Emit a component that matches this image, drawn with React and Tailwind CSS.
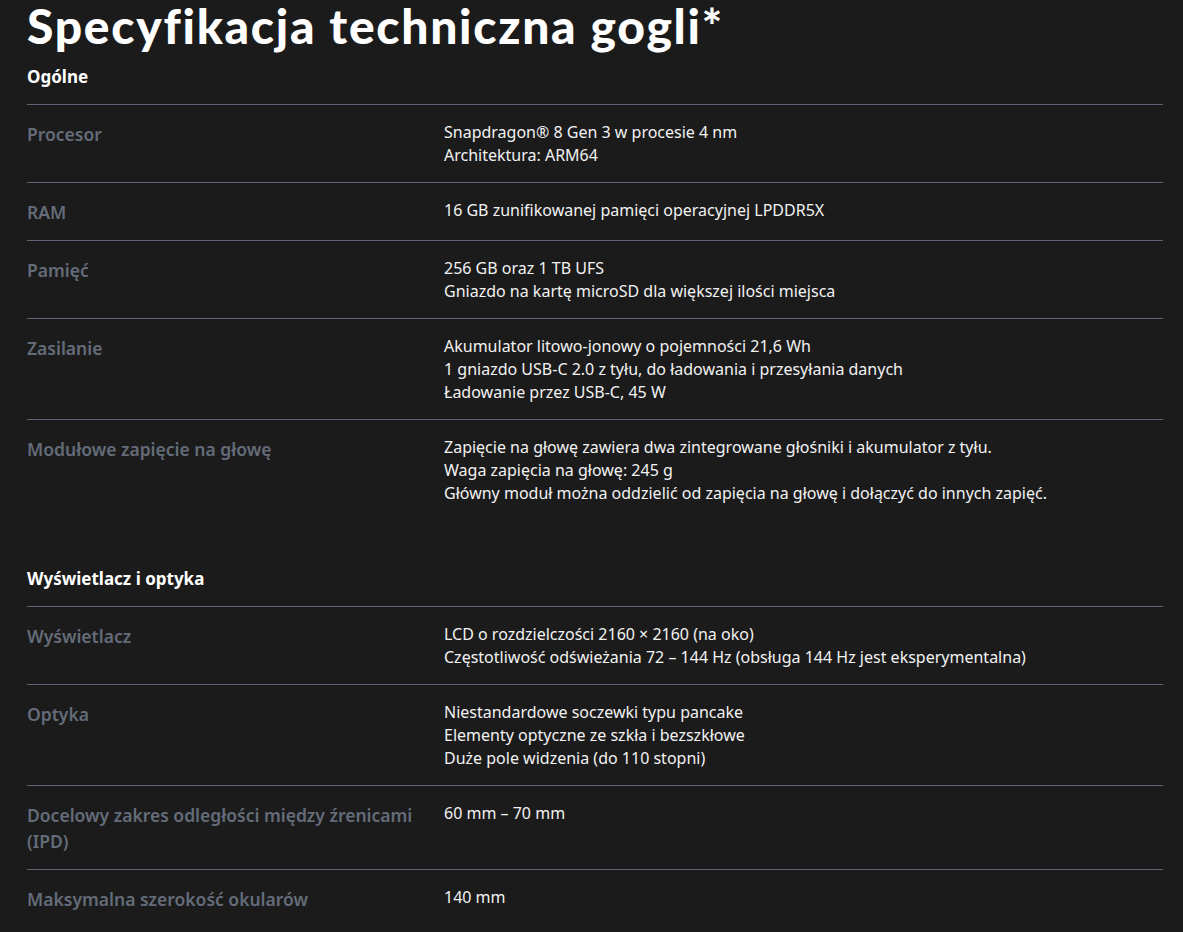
import React from "react";

const GROUPS = [
  {
    title: "Ogólne",
    rows: [
      { label: "Procesor", value: ["Snapdragon® 8 Gen 3 w procesie 4 nm", "Architektura: ARM64"] },
      { label: "RAM", value: ["16 GB zunifikowanej pamięci operacyjnej LPDDR5X"] },
      { label: "Pamięć", value: ["256 GB oraz 1 TB UFS", "Gniazdo na kartę microSD dla większej ilości miejsca"] },
      {
        label: "Zasilanie",
        value: [
          "Akumulator litowo-jonowy o pojemności 21,6 Wh",
          "1 gniazdo USB-C 2.0 z tyłu, do ładowania i przesyłania danych",
          "Ładowanie przez USB-C, 45 W",
        ],
      },
      {
        label: "Modułowe zapięcie na głowę",
        value: [
          "Zapięcie na głowę zawiera dwa zintegrowane głośniki i akumulator z tyłu.",
          "Waga zapięcia na głowę: 245 g",
          "Główny moduł można oddzielić od zapięcia na głowę i dołączyć do innych zapięć.",
        ],
      },
    ],
  },
  {
    title: "Wyświetlacz i optyka",
    rows: [
      {
        label: "Wyświetlacz",
        value: [
          "LCD o rozdzielczości 2160 × 2160 (na oko)",
          "Częstotliwość odświeżania 72 – 144 Hz (obsługa 144 Hz jest eksperymentalna)",
        ],
      },
      {
        label: "Optyka",
        value: [
          "Niestandardowe soczewki typu pancake",
          "Elementy optyczne ze szkła i bezszkłowe",
          "Duże pole widzenia (do 110 stopni)",
        ],
      },
      { label: "Docelowy zakres odległości między źrenicami (IPD)", value: ["60 mm – 70 mm"] },
      { label: "Maksymalna szerokość okularów", value: ["140 mm"] },
    ],
  },
];

function SpecGroup({ group, first }) {
  return (
    <section className={first ? "mt-[12px]" : "mt-[46px]"}>
      <h2 className="text-[17px] leading-[26px] font-bold text-white pb-[14px] border-b border-[#5d6575]">
        {group.title}
      </h2>
      {group.rows.map((row, i) => (
        <div
          key={row.label}
          className={
            "flex pt-4 pb-[15px] " + (i < group.rows.length - 1 ? "border-b border-[#5d6575]" : "")
          }
        >
          <div className="w-[417px] shrink-0 pr-6 text-[17.5px] leading-[26px] font-semibold text-[#646c79]">
            {row.label}
          </div>
          <div className="text-[16px] leading-[23px] text-[#f2f2f2]">
            {row.value.map((line) => (
              <div key={line}>{line}</div>
            ))}
          </div>
        </div>
      ))}
    </section>
  );
}

export default function App() {
  return (
    <div className="min-h-screen bg-[#1b1b1b] px-[27px] pr-[20px] pb-8 font-['Noto_Sans',sans-serif]">
      <h1 className="text-[48px] leading-[52px] font-black tracking-[1.7px] text-white font-['Lato',sans-serif]">
        Specyfikacja techniczna gogli*
      </h1>
      {GROUPS.map((g, i) => (
        <SpecGroup key={g.title} group={g} first={i === 0} />
      ))}
    </div>
  );
}
